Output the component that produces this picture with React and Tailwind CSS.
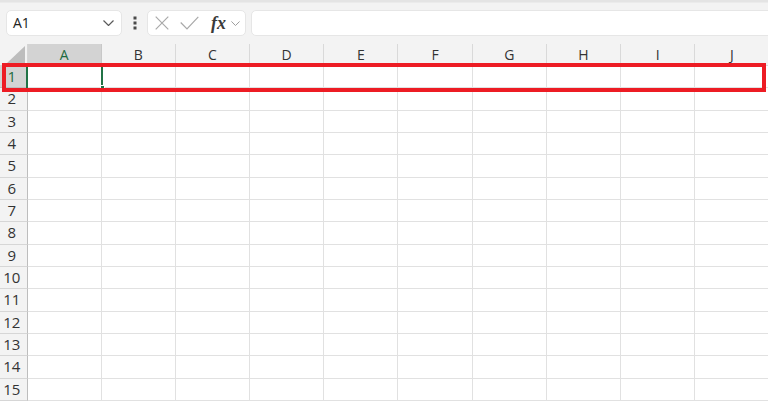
import React from "react";

const cols = ["A", "B", "C", "D", "E", "F", "G", "H", "I", "J"];
const rows = Array.from({ length: 15 }, (_, i) => i + 1);

function Chevron({ className, color = "#5a5a5a", w = 11, h = 6 }) {
  return (
    <svg className={className} width={w} height={h} viewBox="0 0 11 6" fill="none">
      <path d="M0.5 0.5 L5.5 5.5 L10.5 0.5" stroke={color} strokeWidth="1.2" />
    </svg>
  );
}

export default function App() {
  return (
    <div className="relative w-[768px] h-[401px] overflow-hidden bg-white font-['Open_Sans',sans-serif] text-[#333]">
      {/* Toolbar */}
      <div className="h-[44px] bg-[#f3f3f3] flex flex-col">
        <div className="h-[3px] bg-[#e4e4e4] border-b border-[#ebebeb]" />
        <div className="flex items-center pt-[7px] pl-[6px]">
          {/* Name box */}
          <div className="w-[116px] h-[26px] shrink-0 bg-white rounded-[5px] border border-[#e6e6e6] flex items-center justify-between pl-[6px] pr-[7px]">
            <span className="text-[14px] leading-none text-[#222]">A1</span>
            <Chevron />
          </div>
          {/* Dots */}
          <div className="w-[25px] shrink-0 flex justify-center">
            <svg width="4" height="14" viewBox="0 0 4 14">
              <rect x="0.5" y="0.5" width="3" height="3" fill="#4a4a4a" />
              <rect x="0.5" y="5.5" width="3" height="3" fill="#4a4a4a" />
              <rect x="0.5" y="10.5" width="3" height="3" fill="#4a4a4a" />
            </svg>
          </div>
          {/* Formula buttons */}
          <div className="w-[99px] h-[26px] shrink-0 bg-white rounded-[5px] border border-[#e6e6e6] flex items-center pl-[7px]">
            <svg width="14" height="14" viewBox="0 0 14 14" fill="none">
              <path d="M0.7 0.7 L13.3 13.3 M13.3 0.7 L0.7 13.3" stroke="#a9a9a9" strokeWidth="1.2" />
            </svg>
            <svg className="ml-[11px]" width="19" height="14" viewBox="0 0 19 14" fill="none">
              <path d="M0.7 6.5 L7 13 L18.3 0.8" stroke="#a9a9a9" strokeWidth="1.2" />
            </svg>
            <span className="ml-[12px] font-['Liberation_Serif',serif] italic font-bold text-[18px] leading-none text-[#3a3a3a]">
              fx
            </span>
            <Chevron className="ml-[5px]" color="#9a9a9a" w={9} h={5} />
          </div>
          {/* Formula bar */}
          <div className="ml-[5px] w-[530px] shrink-0 h-[26px] bg-white rounded-[5px] border border-[#e6e6e6]" />
        </div>
      </div>

      {/* Column header row */}
      <div className="flex h-[22px]">
        <div className="w-[27.5px] shrink-0 relative bg-[#f3f3f3] border-r border-b border-[#d6d6d6]">
          <svg className="absolute right-[2px] bottom-[2px]" width="18" height="17" viewBox="0 0 18 17">
            <path d="M18 0 L18 17 L0 17 Z" fill="#bdbdbd" />
          </svg>
        </div>
        {cols.map((c) => (
          <div
            key={c}
            className={
              c === "A"
                ? "w-[74.2px] shrink-0 flex items-center justify-center text-[14px] leading-none bg-[#d3d3d3] text-[#1d6b40] border-r border-b border-[#c8c8c8]"
                : "w-[74.2px] shrink-0 flex items-center justify-center text-[14px] leading-none bg-[#f3f3f3] text-[#333] border-r border-b border-[#d9d9d9]"
            }
          >
            {c}
          </div>
        ))}
      </div>

      {/* Rows */}
      {rows.map((r) => (
        <div key={r} className="flex h-[22.33px]">
          <div
            className={
              r === 1
                ? "w-[27.5px] shrink-0 flex items-center justify-center pr-[3px] text-[15px] leading-none bg-[#d3d3d3] text-[#1d6b40] border-r border-b border-[#bdbdbd]"
                : "w-[27.5px] shrink-0 flex items-center justify-center pr-[3px] text-[15px] leading-none bg-[#f3f3f3] text-[#333] border-r border-b border-[#d6d6d6] border-r-[#bdbdbd]"
            }
          >
            {r}
          </div>
          {cols.map((c) => (
            <div key={c} className="w-[74.2px] shrink-0 border-r border-b border-[#e1e1e1]" />
          ))}
        </div>
      ))}

      {/* Active cell selection */}
      <div className="absolute left-[26px] top-[65px] w-[77px] h-[24.5px] border-2 border-[#217346]" />
      <div className="absolute left-[99.5px] top-[85px] w-[5px] h-[5px] bg-[#217346] border border-white" />

      {/* Red highlight rectangle */}
      <div className="absolute left-[1.5px] top-[62.7px] w-[764px] h-[29.3px] border-[4.5px] border-[#ed1c24]" />
    </div>
  );
}
